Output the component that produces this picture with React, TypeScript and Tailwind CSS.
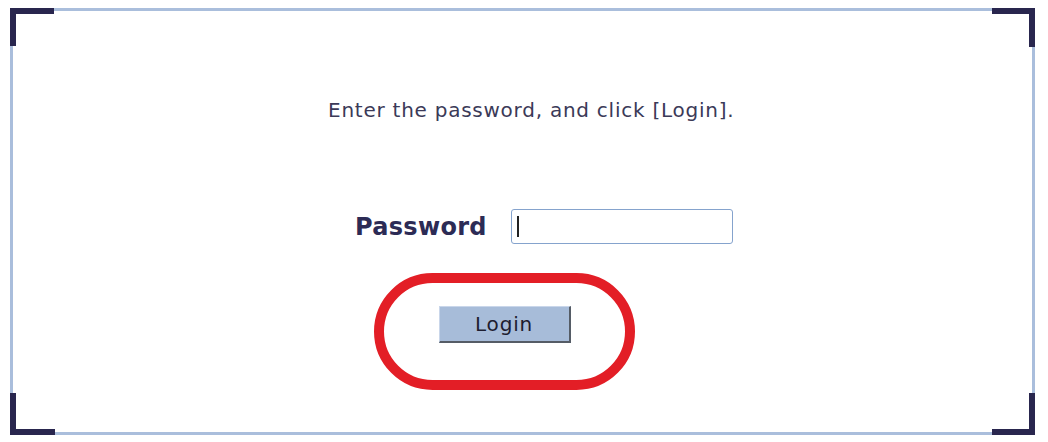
import React from "react";

export default function App() {
  const font = { fontFamily: '"DejaVu Sans", "Noto Sans CJK JP", sans-serif' };
  return (
    <div className="w-[1048px] h-[442px] bg-white pt-[8px] pl-[10px]" style={font}>
      <div className="relative w-[1025px] h-[427px] border-[3px] border-[#aabedc] flex flex-col items-start">
        <div className="absolute -top-[3px] -left-[3px] w-[44px] h-[38px] border-t-[6px] border-l-[6px] border-[#29264e]" />
        <div className="absolute -top-[3px] -right-[3px] w-[43px] h-[39px] border-t-[6px] border-r-[6px] border-[#29264e]" />
        <div className="absolute -bottom-[3px] -left-[3px] w-[45px] h-[42px] border-b-[6px] border-l-[6px] border-[#29264e]" />
        <div className="absolute -bottom-[3px] -right-[3px] w-[43px] h-[42px] border-b-[6px] border-r-[6px] border-[#29264e]" />

        <p className="ml-[315px] mt-[87px] text-[20px] leading-[24px] tracking-[0.75px] text-[#3b3a58] whitespace-nowrap">
          Enter the password, and click [Login].
        </p>

        <div className="ml-[342px] mt-[87px] flex items-center h-[35px]">
          <span className="text-[24px] leading-[28px] font-bold text-[#2c2b55] tracking-[0.3px]">Password</span>
          <div className="ml-[24px] w-[222px] h-[35px] border-[1.5px] border-[#85a3cd] rounded-[3px] bg-white flex items-center pl-[5px]">
            <div className="w-[2px] h-[21px] bg-[#222]" />
          </div>
        </div>

        <div className="ml-[361px] mt-[29px] w-[261px] h-[117px] border-[10px] border-[#e31e26] rounded-full flex justify-center pt-[23px]">
          <button className="w-[132px] h-[37px] bg-[#a7bcd9] border-t border-l border-t-[#c9d6ea] border-l-[#c9d6ea] border-b-[2px] border-r-[2px] border-b-[#555c66] border-r-[#555c66] text-[20px] leading-[24px] tracking-[0.8px] text-[#1d1d30]">
            Login
          </button>
        </div>
      </div>
    </div>
  );
}
